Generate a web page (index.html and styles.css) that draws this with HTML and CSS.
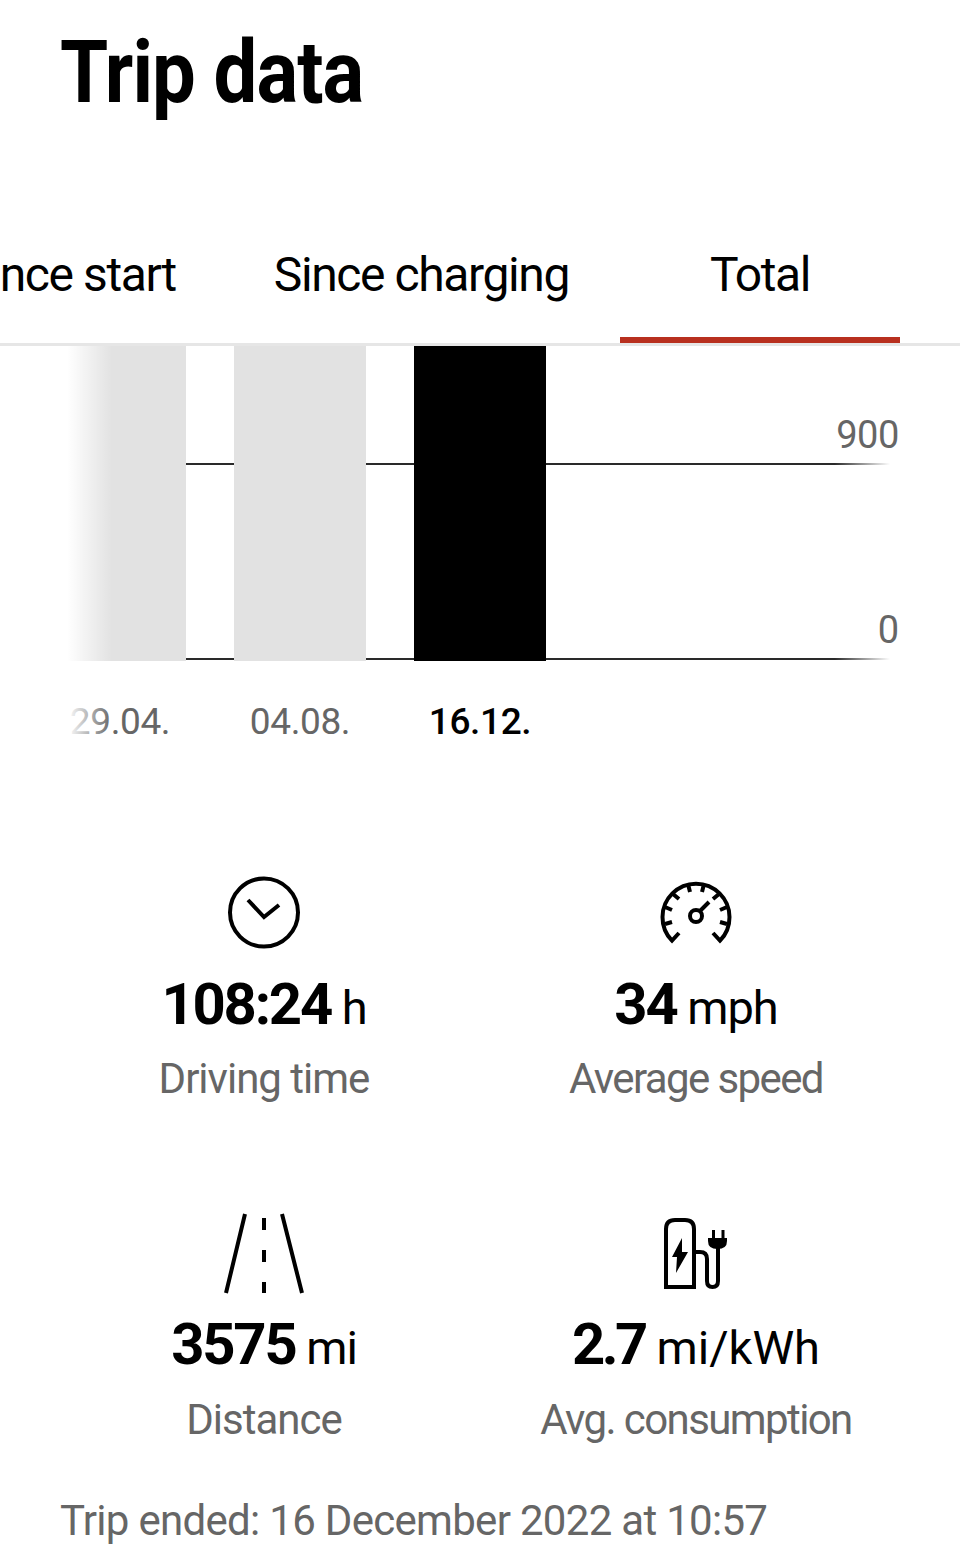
FILE: index.html
```html
<!DOCTYPE html>
<html lang="en">
<head>
<meta charset="utf-8">
<title>Trip data</title>
<link rel="stylesheet" href="styles.css">
</head>
<body>
<main class="page">
  <h1 class="title">Trip data</h1>
  <nav class="tabs">
    <span class="tab tab-start">Since start</span>
    <span class="tab tab-charging">Since charging</span>
    <span class="tab tab-total">Total</span>
  </nav>
  <section class="chart-wrap">
    <div class="chart">
      <div class="bar bar-grey"></div>
      <div class="bar bar-grey"></div>
      <div class="bar bar-black"></div>
      <div class="grid-line line-900"></div>
      <div class="grid-line line-0"></div>
      <span class="axis axis-900">900</span>
      <span class="axis axis-0">0</span>
    </div>
    <div class="dates">
      <span class="date">29.04.</span>
      <span class="date">04.08.</span>
      <span class="date date-on">16.12.</span>
    </div>
    <div class="fade"></div>
  </section>
  <section class="stats">
    <div class="stat">
      <svg class="icon" viewBox="0 0 110 100" aria-hidden="true"><circle cx="54" cy="47.5" r="34" class="st"/><path d="M38 35 54 52 69 40" class="st"/></svg>
      <div class="value"><b>108:24</b> h</div>
      <div class="label">Driving time</div>
    </div>
    <div class="stat">
      <svg class="icon" viewBox="0 0 110 100" aria-hidden="true"><path d="M39 68 32 75.600A33.500 33.500 0 1 1 80 75.600L73 68" class="st"/><path d="M25 59 32 57M25 42 32 45M33 29 39 34M48 19 50 27M64 19 62 27M79 29 73 34M87 42 80 45M87 59 80 57M60 46 69 37" class="st"/><circle cx="56" cy="51" r="6" class="st"/></svg>
      <div class="value"><b>34</b> mph</div>
      <div class="label">Average speed</div>
    </div>
    <div class="stat">
      <svg class="icon" viewBox="0 0 110 100" aria-hidden="true"><path d="M35 9 16 88M72 9 92 88M54 13V25M54 45V57M54 77V88" class="st"/></svg>
      <div class="value"><b>3575</b> mi</div>
      <div class="label">Distance</div>
    </div>
    <div class="stat">
      <svg class="icon" viewBox="0 0 110 100" aria-hidden="true"><path d="M26 82V24q0-9 9-9h10q9 0 9 9V82Z" class="st"/><path d="M42 33 32 52H37L36 68 48 47H42Z"/><path d="M56 47h4q7 0 7 7V76q0 6 5.500 6t5.500-6V42" class="st"/><path d="M68 33h19v3q0 8-9.500 8t-9.500-8Z"/><path d="M72 25h3v9h-3ZM81.500 25h3v9h-3Z"/></svg>
      <div class="value"><b>2.7</b> mi/kWh</div>
      <div class="label">Avg. consumption</div>
    </div>
  </section>
  <p class="ended">Trip ended: 16 December 2022 at 10:57</p>
</main>
</body>
</html>
```
FILE: styles.css
```css
* { box-sizing: border-box; }
html, body { margin: 0; background: #fff; }
body { font-family: Roboto, "Liberation Sans", sans-serif; color: #000; }
.page { width: 960px; height: 1563px; overflow: hidden; }

.title {
  margin: 0;
  padding: 20px 0 0 60px;
  font-size: 87px;
  line-height: 104px;
  font-weight: 700;
  letter-spacing: -1px;
  transform: scaleX(.895);
  transform-origin: 60px 0;
}

.tabs {
  display: flex;
  justify-content: flex-end;
  align-items: flex-start;
  margin-top: 120px;
  height: 102px;
  border-bottom: 3px solid #e6e6e6;
  overflow: hidden;
  padding-right: 60px;
  white-space: nowrap;
  font-size: 48px;
  line-height: 60px;
  letter-spacing: -1.4px;
}
.tab { flex: none; display: block; height: 99px; padding-top: 1px; }
.tab-start { margin-right: 98px; }
.tab-charging { margin-right: 51px; }
.tab-total { width: 280px; text-align: center; border-bottom: 6px solid #b8301f; }

.chart-wrap { position: relative; }
.chart {
  position: relative;
  display: flex;
  gap: 48px;
  height: 315px;
  padding-left: 54px;
}
.bar { flex: none; width: 132px; position: relative; z-index: 1; }
.bar-grey { background: #e2e2e2; }
.bar-black { background: #000; }
.grid-line {
  position: absolute;
  left: 100px;
  right: 70px;
  height: 2px;
  background: linear-gradient(to right, #2a2a2a 0, #2a2a2a 93%, rgba(42,42,42,0) 100%);
}
.line-900 { top: 117px; }
.line-0 { top: 312px; }
.axis {
  position: absolute;
  right: 61px;
  font-size: 38px;
  line-height: 46px;
  color: #666;
}
.axis-900 { top: 66px; letter-spacing: -.4px; }
.axis-0 { top: 261px; }

.dates {
  display: flex;
  gap: 48px;
  padding-left: 54px;
  margin-top: 39px;
}
.date {
  flex: none;
  width: 132px;
  text-align: center;
  font-size: 37px;
  line-height: 44px;
  color: #666;
  letter-spacing: -.4px;
}
.date-on { color: #000; font-weight: 500; }
.fade {
  position: absolute;
  left: 0;
  top: 0;
  bottom: 0;
  width: 112px;
  background: linear-gradient(to right, #fff 0, #fff 60%, rgba(255,255,255,0) 100%);
  z-index: 2;
}

.stats {
  display: grid;
  grid-template-columns: 432px 432px;
  grid-template-rows: 340px 291px;
  padding-left: 48px;
  margin-top: 121px;
}
.stat { display: flex; flex-direction: column; align-items: center; text-align: center; }
.icon { width: 110px; height: 100px; fill: #000; flex: none; }
.stat:nth-child(odd) .icon { margin-left: 2px; }
.stat:nth-child(even) .icon { margin-right: 2px; }
.st { fill: none; stroke: #000; stroke-width: 4; }
.value {
  font-size: 47px;
  line-height: 68px;
  margin-top: 5px;
  letter-spacing: -1px;
  white-space: nowrap;
}
.stat:nth-child(n+3) .value { margin-top: 5px; }
.stat:nth-child(n+3) .label { margin-top: 13px; }
.stat:last-child .value { letter-spacing: 0; }
.value b { font-size: 58px; font-weight: 700; letter-spacing: -2.2px; }
.stat:last-child .value b { letter-spacing: -3.5px; }
.label {
  font-size: 42px;
  line-height: 50px;
  margin-top: 12px;
  color: #666;
  letter-spacing: -1px;
  white-space: nowrap;
}
.stat:nth-child(even) .label { letter-spacing: -1.6px; }
.ended {
  margin: 0;
  padding-left: 60px;
  font-size: 42px;
  line-height: 50px;
  color: #666;
  letter-spacing: -.7px;
  white-space: nowrap;
}
```
